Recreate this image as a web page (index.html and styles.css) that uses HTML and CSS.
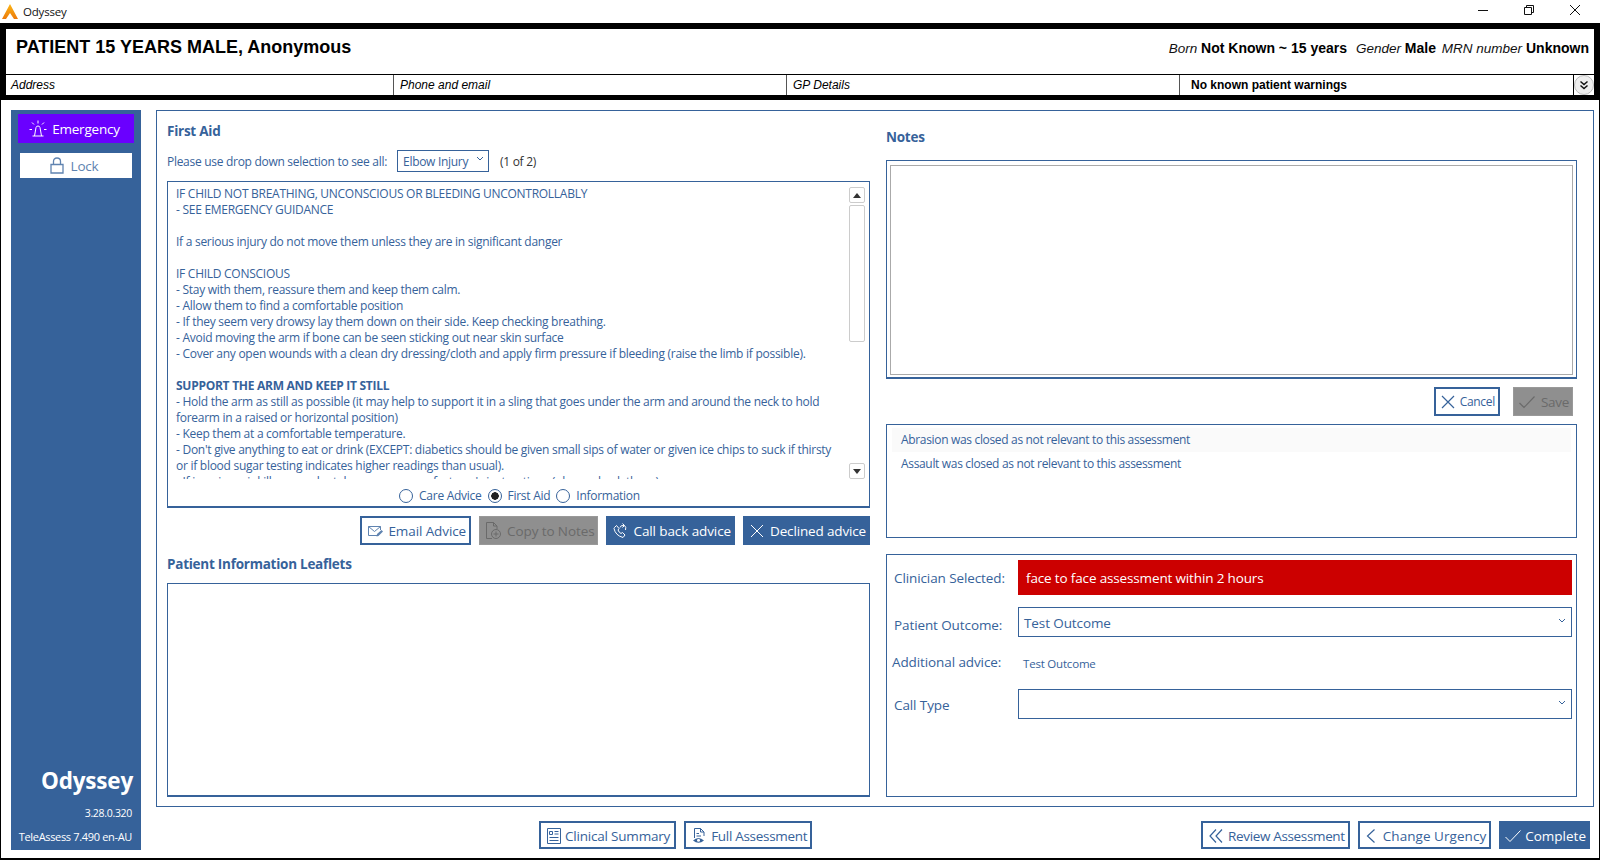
FILE: index.html
```html
<!DOCTYPE html>
<html lang="en">
<head>
<meta charset="utf-8">
<title>Odyssey</title>
<link rel="stylesheet" href="styles.css">
</head>
<body>
<div class="app">
  <header class="titlebar">
    <svg class="logo" viewBox="0 0 16 15" width="16" height="15"><defs><linearGradient id="lg" x1="0" y1="0" x2="0" y2="1"><stop offset="0" stop-color="#fbb515"/><stop offset="1" stop-color="#ec7a0c"/></linearGradient></defs><path d="M8 0 L16 15 L12 15 L8 9 L4 15 L0 15 Z" fill="url(#lg)"/></svg>
    <span class="app-name">Odyssey</span>
    <div class="win-controls">
      <svg width="12" height="12" viewBox="0 0 12 12"><path d="M1 6.5H11" stroke="#111" fill="none"/></svg>
      <svg width="12" height="12" viewBox="0 0 12 12"><path d="M1.5 3.5H8.5V10.5H1.5ZM3.5 3.5V1.5H10.5V8.5H8.5" stroke="#111" fill="none"/></svg>
      <svg width="12" height="12" viewBox="0 0 12 12"><path d="M1 1L11 11M11 1L1 11" stroke="#111" fill="none"/></svg>
    </div>
  </header>

  <section class="patient">
    <div class="patient-top">
      <h1 class="patient-name">PATIENT 15 YEARS MALE, Anonymous</h1>
      <div class="patient-meta">
        <i>Born</i> <b>Not Known ~ 15 years</b>
        <i class="m-gap">Gender</i> <b>Male</b>
        <i class="m-gap2">MRN number</i> <b>Unknown</b>
      </div>
    </div>
    <div class="patient-row">
      <div class="cell cell-a">Address</div>
      <div class="cell cell-b">Phone and email</div>
      <div class="cell cell-c">GP Details</div>
      <div class="cell cell-d">No known patient warnings</div>
      <div class="expand">
        <svg width="12" height="12" viewBox="0 0 12 12"><path d="M2.5 2.5L6 5.5L9.5 2.5M2.5 6.5L6 9.5L9.5 6.5" stroke="#111" stroke-width="1.5" fill="none"/></svg>
      </div>
    </div>
  </section>

  <main class="content">
    <aside class="sidebar">
      <button class="side-btn emergency">
        <svg width="20" height="20" viewBox="0 0 20 20"><path d="M4.5 17H15.5M6.5 17L8 8.5Q8.3 7 10 7T12 8.5L13.5 17M10 1.5V4.5M4 3.5L6 5.5M16 3.5L14 5.5M1.5 10.5H4M16 10.5H18.5" stroke="#fff" fill="none"/></svg>
        Emergency
      </button>
      <button class="side-btn lock">
        <svg width="14" height="17" viewBox="0 0 14 17"><path d="M1 7.5H13V16H1ZM3.5 7.5V4.5Q3.5 1 7 1T10.5 4.5V7.5" stroke="#5f83b0" stroke-width="1.3" fill="none"/></svg>
        Lock
      </button>
      <div class="side-fill"></div>
      <div class="brand">Odyssey</div>
      <div class="version">3.28.0.320</div>
      <div class="tele">TeleAssess 7.490 en-AU</div>
    </aside>

    <div class="workspace">
      <div class="panel">
        <div class="col-left">
          <h2 class="title t-first">First Aid</h2>
          <div class="pick-row">
            <span>Please use drop down selection to see all:</span>
            <div class="mini-select">Elbow Injury
              <svg width="8" height="6" viewBox="0 0 8 6"><path d="M1 1L4 4L7 1" stroke="#36629a" fill="none"/></svg>
            </div>
            <span class="count">(1 of 2)</span>
          </div>
          <div class="advice-box">
            <div class="advice-scroll">
              <div class="advice-text">
                <p>IF CHILD NOT BREATHING, UNCONSCIOUS OR BLEEDING UNCONTROLLABLY<br>- SEE EMERGENCY GUIDANCE</p>
                <p>If a serious injury do not move them unless they are in significant danger</p>
                <p>IF CHILD CONSCIOUS<br>- Stay with them, reassure them and keep them calm.<br>- Allow them to find a comfortable position<br>- If they seem very drowsy lay them down on their side. Keep checking breathing.<br>- Avoid moving the arm if bone can be seen sticking out near skin surface<br>- Cover any open wounds with a clean dry dressing/cloth and apply firm pressure if bleeding (raise the limb if possible).</p>
                <p><b>SUPPORT THE ARM AND KEEP IT STILL</b><br>- Hold the arm as still as possible (it may help to support it in a sling that goes under the arm and around the neck to hold forearm in a raised or horizontal position)<br>- Keep them at a comfortable temperature.<br>- Don't give anything to eat or drink (EXCEPT: diabetics should be given small sips of water or given ice chips to suck if thirsty or if blood sugar testing indicates higher readings than usual).<br>- If in pain, painkillers may be taken as per manufacturer's instructions (please check these).</p>
              </div>
              <div class="scrollbar">
                <div class="sb-btn"><svg width="8" height="5" viewBox="0 0 8 5"><path d="M4 0L8 5H0Z" fill="#333"/></svg></div>
                <div class="sb-thumb"></div>
                <div class="sb-fill"></div>
                <div class="sb-btn"><svg width="8" height="5" viewBox="0 0 8 5"><path d="M0 0H8L4 5Z" fill="#333"/></svg></div>
              </div>
            </div>
            <div class="radios">
              <span class="radio"></span><span class="r-label">Care Advice</span>
              <span class="radio on"></span><span class="r-label">First Aid</span>
              <span class="radio"></span><span class="r-label">Information</span>
            </div>
          </div>
          <div class="actions">
            <button class="btn outline">
              <svg width="16" height="14" viewBox="0 0 16 14"><path d="M1.5 2.5H13.5V6M10 11.5H1.5V2.5M1.5 2.5L7.5 7.5L13.5 2.5" stroke="#5f83b0" fill="none"/><path d="M9.5 12.5L10 10L14.5 6L16 7.5L11.5 12Z" fill="#5f83b0"/></svg>
              Email Advice</button>
            <button class="btn disabled">
              <svg width="17" height="19" viewBox="0 0 17 19"><path d="M7 17.5H1.5V1.5H8.5L12 5V8M8.5 1.5V5H12" stroke="#6a6a6a" fill="none"/><circle cx="11" cy="13" r="4.5" stroke="#6a6a6a" fill="none"/><path d="M11 10.5V15.5M8.5 13H13.5" stroke="#6a6a6a" fill="none"/></svg>
              Copy to Notes</button>
            <button class="btn solid">
              <svg width="16" height="16" viewBox="0 0 16 16"><path d="M2.5 4.5L4.5 2.5L7 5.5L6 7Q7 9.5 9 10.5L10.5 9.5L13 12L11 14.5Q3.5 12.5 2 5.5ZM8 4.5Q8.5 2 12 2.5M10.5 .5L12.5 2.5L10.5 4.5M12.5 2.5Q14.5 4 13.5 7" stroke="#fff" fill="none"/></svg>
              Call back advice</button>
            <button class="btn solid declined">
              <svg width="16" height="16" viewBox="0 0 16 16"><path d="M2 2L14 14M14 2L2 14" stroke="#fff" fill="none"/></svg>
              Declined advice</button>
          </div>
          <h2 class="title t-leaf">Patient Information Leaflets</h2>
          <div class="leaflets"></div>
        </div>

        <div class="col-right">
          <h2 class="title t-notes">Notes</h2>
          <div class="notes-box"><div class="notes-inner"></div></div>
          <div class="note-actions">
            <button class="btn outline small">
              <svg width="16" height="16" viewBox="0 0 16 16"><path d="M2 2L14 14M14 2L2 14" stroke="#36629a" stroke-width="1.2" fill="none"/></svg>
              Cancel</button>
            <button class="btn disabled save">
              <svg width="18" height="14" viewBox="0 0 18 14"><path d="M1.5 8L6 12.5L16.5 1.5" stroke="#6a6a6a" stroke-width="1.2" fill="none"/></svg>
              Save</button>
          </div>
          <div class="closed-list">
            <div class="closed-item alt">Abrasion was closed as not relevant to this assessment</div>
            <div class="closed-item">Assault was closed as not relevant to this assessment</div>
          </div>
          <div class="outcome">
            <div class="o-row o-clin">
              <span class="o-label">Clinician Selected:</span>
              <div class="urgency">face to face assessment within 2 hours</div>
            </div>
            <div class="o-row o-pat">
              <span class="o-label">Patient Outcome:</span>
              <div class="select">Test Outcome
                <svg width="8" height="6" viewBox="0 0 8 6"><path d="M1 1L4 4L7 1" stroke="#36629a" fill="none"/></svg>
              </div>
            </div>
            <div class="o-row o-add">
              <span class="o-label add-label">Additional advice:</span>
              <span class="add-text">Test Outcome</span>
            </div>
            <div class="o-row o-call">
              <span class="o-label call-label">Call Type</span>
              <div class="select">
                <svg width="8" height="6" viewBox="0 0 8 6"><path d="M1 1L4 4L7 1" stroke="#36629a" fill="none"/></svg>
              </div>
            </div>
          </div>
        </div>
      </div>

      <footer class="footer">
        <div class="foot-left">
          <button class="btn outline summary">
            <svg width="16" height="18" viewBox="0 0 16 18"><path d="M1.5 1.5H14.5V16.5H1.5ZM3.5 4.5H6.5V7.5H3.5ZM8.5 4.5H12.5M8.5 7H12.5M3.5 10.5H12.5M3.5 13.5H12.5" stroke="#36629a" fill="none"/></svg>
            Clinical Summary</button>
          <button class="btn outline full">
            <svg width="16" height="18" viewBox="0 0 16 18"><path d="M3.5 11V1.5H9.5L13 5V9M9.5 1.5V5H13M5.5 6.5H8M5.5 9H10" stroke="#36629a" fill="none"/><path d="M2 13.5Q7.5 8.5 13 13.5Q7.5 18 2 13.5Z" fill="#36629a"/><circle cx="7.5" cy="13.3" r="1.5" fill="#fff"/></svg>
            Full Assessment</button>
        </div>
        <div class="foot-right">
          <button class="btn outline review">
            <svg width="16" height="16" viewBox="0 0 16 16"><path d="M8 1.5L2 8L8 14.5M14 1.5L8 8L14 14.5" stroke="#36629a" stroke-width="1.2" fill="none"/></svg>
            Review Assessment</button>
          <button class="btn outline urgency-btn">
            <svg width="12" height="16" viewBox="0 0 12 16"><path d="M9.5 1.5L2.5 8L9.5 14.5" stroke="#36629a" stroke-width="1.2" fill="none"/></svg>
            Change Urgency</button>
          <button class="btn solid complete">
            <svg width="18" height="14" viewBox="0 0 18 14"><path d="M1.5 8L6 12.5L16.5 1.5" stroke="#fff" fill="none"/></svg>
            Complete</button>
        </div>
      </footer>
    </div>
  </main>
</div>
</body>
</html>
```
FILE: styles.css
```css
* { box-sizing: border-box; }
html, body { margin: 0; padding: 0; }
body {
  width: 1600px; height: 860px; overflow: hidden; background: #fff;
  font-family: "Open Sans", "Noto Sans", sans-serif; color: #36629a;
}
p { margin: 0 0 16px; }
h1, h2 { margin: 0; }
.app { display: flex; flex-direction: column; height: 860px; }

.titlebar { height: 23px; display: flex; align-items: center; padding-left: 2px; color: #111; font-size: 11.5px; letter-spacing: -.2px; }
.logo { margin-right: 5px; }
.win-controls { margin-left: auto; display: flex; gap: 34px; padding-right: 19px; padding-bottom: 4px; }

.patient { border: solid #000; border-width: 6px 6px 5px; font-family: "Liberation Sans", Arial, sans-serif; color: #000; }
.patient-top { height: 45px; display: flex; justify-content: space-between; padding: 8px 5px 0 10px; }
.patient-name { font-size: 18px; line-height: 20px; font-weight: 700; }
.patient-meta { font-size: 14px; line-height: 20px; padding-top: 1px; }
.patient-meta i { font-size: 13.5px; color: #111; }
.m-gap { margin-left: 5px; }
.m-gap2 { margin-left: 2px; }
.patient-row { height: 21px; display: flex; border-top: 1px solid #000; font-size: 12px; line-height: 20px; font-style: italic; }
.cell { padding-left: 6px; border-right: 1px solid #555; }
.cell-a { width: 388px; padding-left: 5px; }
.cell-b { width: 393px; }
.cell-c { width: 393px; }
.cell-d { flex: 1; padding-left: 11px; font-style: normal; font-weight: 700; border-right: 1px solid #000; }
.expand { width: 20px; display: flex; align-items: center; justify-content: center; background: #eee; border-radius: 50%; border: 1px solid #bbb; }

.content { flex: 1; display: flex; gap: 15px; padding: 10px 5px 8px 10px; border-left: 1px solid #000; border-right: 1px solid #000; border-bottom: 2px solid #000; min-height: 0; }

.sidebar { width: 130px; background: #36629a; display: flex; flex-direction: column; align-items: center; padding: 4px 0 6px; color: #fff; }
.side-btn { display: flex; align-items: center; justify-content: center; gap: 4px; font: inherit; font-size: 13.5px; letter-spacing: -.2px; border: 1px solid transparent; padding: 0 4px 0 0; }
.emergency { width: 116px; height: 29px; background: #6a00ff; color: #fff; }
.lock { width: 112px; height: 25px; margin-top: 10px; background: #fff; color: #5f83b0; gap: 7px; }
.side-fill { flex: 1; }
.brand { align-self: flex-end; padding-right: 8px; font-size: 22.5px; line-height: 28px; font-weight: 700; letter-spacing: -.2px; margin-bottom: -1px; }
.version { align-self: flex-end; padding-right: 9px; margin-top: 12px; font-size: 10.5px; line-height: 14px; letter-spacing: -.3px; }
.tele { align-self: flex-end; padding-right: 9px; margin-top: 10px; font-size: 11px; line-height: 14px; letter-spacing: -.33px; }

.workspace { flex: 1; display: flex; flex-direction: column; min-width: 0; }
.panel { height: 697px; border: 1px solid #36629a; display: flex; padding: 0 16px 0 10px; gap: 16px; }
.col-left { width: 703px; display: flex; flex-direction: column; }
.col-right { flex: 1; display: flex; flex-direction: column; min-width: 0; }

.title { font-size: 13.5px; line-height: 18px; font-weight: 700; letter-spacing: -.25px; }
.t-first { margin-top: 11px; }
.pick-row { margin-top: 10px; height: 22px; display: flex; align-items: center; font-size: 12px; letter-spacing: -.29px; }
.mini-select { margin-left: 10px; width: 92px; height: 22px; border: 1px solid #36629a; display: flex; align-items: center; justify-content: space-between; padding: 0 4px 0 5px; font-size: 12px; letter-spacing: -.3px; }
.mini-select svg { margin-bottom: 4px; }
.count { margin-left: 11px; color: #333; }

.advice-box { margin-top: 9px; height: 327px; border: 1px solid #36629a; border-bottom-width: 2px; display: flex; flex-direction: column; }
.advice-scroll { height: 297px; flex: none; display: flex; overflow: hidden; padding: 4px 4px 0 8px; }
.advice-text { flex: 1; min-width: 0; font-size: 12px; line-height: 16px; letter-spacing: -.27px; padding-right: 7px; }
.scrollbar { width: 16px; flex: none; display: flex; flex-direction: column; gap: 2px; height: 292px; margin-top: 1px; }
.sb-btn { height: 16px; flex: none; display: flex; align-items: center; justify-content: center; border: 1px solid #ccc; border-radius: 2px; background: #fff; }
.sb-thumb { height: 137px; border: 1px solid #ccc; border-radius: 2px; }
.sb-fill { flex: 1; }
.radios { flex: 1; display: flex; align-items: center; justify-content: center; gap: 6px; font-size: 12px; letter-spacing: -.27px; padding: 6px 0 0 2px; }
.radio { width: 14px; height: 14px; flex: none; border: 1.5px solid #36629a; border-radius: 50%; }
.radio.on { background: radial-gradient(circle, #222 0 3.5px, #fff 4px); }

.actions { margin-top: 8px; display: flex; justify-content: flex-end; gap: 8px; }
.btn { display: inline-flex; align-items: center; gap: 5px; font: inherit; font-size: 13.5px; letter-spacing: -.1px; height: 29px; padding: 0 3px 0 5px; white-space: nowrap; }
.outline { background: #fff; border: 2px solid #36629a; color: #36629a; }
.solid { background: #36629a; border: 1px solid #36629a; color: #fff; }
.disabled { background: #8f8f8f; border: 1px solid #999; color: #6a6a6a; }
.small { font-size: 12px; gap: 4px; letter-spacing: -.3px; padding-left: 4px; }
.save { padding-left: 4px; letter-spacing: -.3px; }
.declined { letter-spacing: -.15px; }

.t-leaf { margin-top: 10px; }
.leaflets { margin-top: 10px; width: 703px; height: 214px; border: 1px solid #36629a; border-bottom-width: 2px; }

.t-notes { margin-top: 17px; }
.notes-box { margin-top: 14px; height: 219px; border: 1px solid #36629a; border-bottom-width: 2px; padding: 4px 3px 2px 3px; }
.notes-inner { height: 100%; border: 1px solid #aaa; }
.note-actions { margin-top: 8px; display: flex; justify-content: flex-end; gap: 13px; padding-right: 4px; }
.closed-list { margin-top: 8px; height: 114px; border: 1px solid #36629a; padding: 3px 5px 0; font-size: 12px; letter-spacing: -.33px; }
.closed-item { height: 24px; line-height: 24px; padding-left: 9px; }
.closed-item.alt { background: #fafafa; }
.outcome { margin-top: 16px; height: 243px; border: 1px solid #36629a; padding: 5px 4px 0 7px; }
.o-row { display: flex; align-items: center; font-size: 13.5px; letter-spacing: -.1px; }
.o-label { width: 124px; flex: none; }
.urgency { flex: 1; height: 35px; line-height: 36px; padding-left: 8px; background: #cc0000; color: #fff; letter-spacing: -.15px; }
.select { flex: 1; height: 30px; border: 1px solid #36629a; display: flex; align-items: center; justify-content: space-between; padding: 1px 5px 0; }
.select svg { margin-left: auto; margin-bottom: 4px; }
.o-pat { margin-top: 12px; }
.o-pat .o-label { padding-top: 5px; }
.o-add { margin-top: 16px; }
.add-label { margin-left: -2px; width: 126px; padding-bottom: 3px; }
.add-text { font-size: 11.5px; letter-spacing: -.2px; padding-left: 5px; }
.o-call { margin-top: 15px; }
.call-label { padding-top: 2px; }

.footer { flex: 1; display: flex; justify-content: space-between; padding: 14px 4px 0 383px; }
.foot-left, .foot-right { display: flex; gap: 8px; }
.footer .btn { height: 28px; padding-top: 2px; }
.summary { gap: 3px; letter-spacing: -.2px; padding-right: 4px; }
.full { gap: 4px; letter-spacing: -.3px; }
.review { gap: 4px; letter-spacing: -.35px; }
.urgency-btn { letter-spacing: .05px; gap: 6px; }
.complete { padding-left: 4px; gap: 3px; letter-spacing: 0; }
```
